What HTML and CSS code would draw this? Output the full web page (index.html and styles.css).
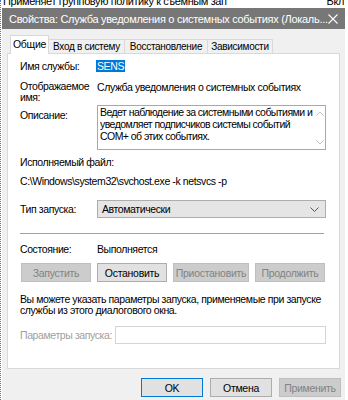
FILE: index.html
```html
<!DOCTYPE html>
<html lang="ru">
<head>
  <meta charset="UTF-8" />
  <title>Свойства: Служба уведомления о системных событиях</title>
  <link rel="stylesheet" href="styles.css">
</head>
<body>
  <div class="behind">
    <span>Применяет групповую политику к съемным зап</span>
    <span>Вкл</span>
  </div>

  <div class="dialog">
    <div class="titlebar">
      <span class="title">Свойства: Служба уведомления о системных событиях (Локаль...</span>
      <svg class="close" width="10" height="10" viewBox="0 0 10 10">
        <path d="M0.5 0.5 L9.5 9.5 M9.5 0.5 L0.5 9.5" stroke="#fff" stroke-width="1.1" fill="none" />
      </svg>
    </div>

    <div class="content">
      <div class="tabs">
        <div class="tab active">Общие</div>
        <div class="tab t2">Вход в систему</div>
        <div class="tab t3">Восстановление</div>
        <div class="tab t4">Зависимости</div>
      </div>

      <div class="panel">
        <div class="row row-name">
          <div class="label">Имя службы:</div>
          <div class="value"><span class="selected">SENS</span></div>
        </div>

        <div class="row row-display">
          <div class="label">Отображаемое<br>имя:</div>
          <div class="value">Служба уведомления о системных событиях</div>
        </div>

        <div class="row row-desc">
          <div class="label">Описание:</div>
          <div class="desc">
            <div class="desc-text">Ведет наблюдение за системными событиями и уведомляет подписчиков системы событий COM+ об этих событиях.</div>
            <div class="desc-scroll">
              <svg width="8" height="5" viewBox="0 0 8 5"><path d="M0.5 4.5 L4 1 L7.5 4.5" stroke="#c2c2c2" fill="none" /></svg>
              <svg width="8" height="5" viewBox="0 0 8 5"><path d="M0.5 0.5 L4 4 L7.5 0.5" stroke="#c2c2c2" fill="none" /></svg>
            </div>
          </div>
        </div>

        <div class="line exe-label">Исполняемый файл:</div>
        <div class="line exe-path">C:\Windows\system32\svchost.exe -k netsvcs -p</div>

        <div class="row row-startup">
          <div class="label">Тип запуска:</div>
          <div class="combo">
            <span>Автоматически</span>
            <svg width="9" height="5" viewBox="0 0 9 5"><path d="M0.5 0.5 L4.5 4.5 L8.5 0.5" stroke="#555" fill="none" /></svg>
          </div>
        </div>

        <div class="separator"></div>

        <div class="row row-state">
          <div class="label">Состояние:</div>
          <div class="value">Выполняется</div>
        </div>

        <div class="actions">
          <button class="btn disabled w70">Запустить</button>
          <button class="btn w70">Остановить</button>
          <button class="btn disabled w76">Приостановить</button>
          <button class="btn disabled w70">Продолжить</button>
        </div>

        <div class="hint">Вы можете указать параметры запуска, применяемые при запуске службы из этого диалогового окна.</div>

        <div class="row row-params">
          <div class="label dim">Параметры запуска:</div>
          <div class="params-input"></div>
        </div>
      </div>

      <div class="footer">
        <button class="btn focus">OK</button>
        <button class="btn">Отмена</button>
        <button class="btn disabled">Применить</button>
      </div>
    </div>
  </div>
</body>
</html>
```

FILE: styles.css
```css
* {
  box-sizing: border-box;
}
body {
  margin: 0;
  width: 348px;
  height: 400px;
  overflow: hidden;
  background: #ffffff;
  border-left: 1px dotted #3a78c9;
  padding-left: 1px;
  font-family: "Liberation Sans", Arial, sans-serif;
  font-size: 10.5px;
  letter-spacing: -0.4px;
  color: #000;
}
.behind {
  height: 8px;
  overflow: hidden;
  display: flex;
  justify-content: space-between;
  padding: 0 4px 0 1px;
  font-size: 11px;
  line-height: 8px;
  white-space: nowrap;
}
.behind span {
  margin-top: -3px;
}
.dialog {
  width: 343px;
  height: 392px;
  background: #f0f0f0;
}
.titlebar {
  height: 21px;
  background: #777777;
  color: #fff;
  display: flex;
  align-items: center;
  justify-content: space-between;
  padding: 0 9px 0 7px;
  font-size: 11px;
  letter-spacing: -0.3px;
  white-space: nowrap;
}
.close {
  flex: none;
}
.content {
  padding: 6px 5px 0 5px;
}
.tabs {
  display: flex;
  align-items: flex-end;
  padding-left: 3px;
  height: 18px;
  position: relative;
  z-index: 1;
  font-size: 10px;
  letter-spacing: -0.3px;
}
.tab {
  height: 14px;
  line-height: 13px;
  text-align: center;
  border: 1px solid #d9d9d9;
  border-bottom: none;
  border-left: none;
  background: #f0f0f0;
}
.tab.active {
  width: 39px;
  height: 19px;
  line-height: 16px;
  background: #fff;
  border-left: 1px solid #d9d9d9;
  margin-bottom: -1px;
  font-size: 10.5px;
}
.t2 {
  width: 76px;
}
.t3 {
  width: 83px;
}
.t4 {
  width: 65px;
}
.panel {
  height: 316px;
  background: #fff;
  border: 1px solid #d9d9d9;
  padding: 7px 13px 0 12px;
  line-height: 11px;
}
.row {
  display: flex;
  align-items: flex-start;
}
.label {
  width: 77px;
  flex: none;
}
.value {
  flex: 1;
}
.selected {
  background: #0078d7;
  color: #fff;
  padding: 0 1px;
  margin-left: -1px;
}
.row-display {
  margin-top: 9px;
}
.row-display .value {
  margin-top: 1px;
}
.row-desc {
  margin-top: 2px;
}
.row-desc .label {
  margin-top: 5px;
}
.desc {
  flex: 1;
  height: 45px;
  border: 1px solid #a9a9a9;
  display: flex;
  line-height: 12px;
}
.desc-text {
  flex: 1;
  padding: 0 0 0 2px;
  letter-spacing: -0.55px;
}
.desc-scroll {
  width: 10px;
  flex: none;
  display: flex;
  flex-direction: column;
  justify-content: space-between;
  align-items: center;
  padding: 5px 1px 4px 0;
}
.desc-scroll svg {
  display: block;
}
.exe-label {
  margin-top: 7px;
}
.exe-path {
  margin-top: 8px;
}
.row-startup {
  margin-top: 13px;
  align-items: center;
}
.combo {
  flex: 1;
  height: 18px;
  background: #e5e5e5;
  border: 1px solid #adadad;
  display: flex;
  align-items: center;
  justify-content: space-between;
  padding: 0 6px 0 4px;
}
.separator {
  height: 1px;
  background: #a0a0a0;
  margin: 15px 2px 0 0;
}
.row-state {
  margin-top: 10px;
}
.actions {
  display: flex;
  gap: 6px;
  margin-top: 8px;
  padding-left: 1px;
}
.btn {
  height: 19px;
  margin: 0;
  padding: 0;
  font-family: inherit;
  font-size: 10.5px;
  letter-spacing: -0.3px;
  color: #000;
  background: #e1e1e1;
  border: 1px solid #adadad;
}
.btn.disabled {
  background: #cccccc;
  border-color: #bfbfbf;
  color: #838383;
}
.w70 {
  width: 70px;
}
.w76 {
  width: 76px;
}
.hint {
  margin-top: 12px;
  margin-right: -10px;
}
.row-params {
  margin-top: 10px;
  align-items: center;
}
.label.dim {
  width: 95px;
  color: #a0a0a0;
  white-space: nowrap;
}
.params-input {
  flex: 1;
  height: 18px;
  border: 1px solid #d5d5d5;
}
.footer {
  display: flex;
  justify-content: flex-end;
  gap: 7px;
  margin-top: 9px;
  margin-right: -1px;
}
.footer .btn {
  width: 62px;
}
.btn.focus {
  border: 1px solid #0078d7;
}
```
